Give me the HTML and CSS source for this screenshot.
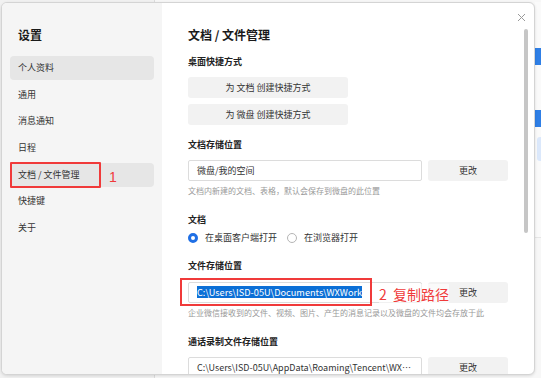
FILE: index.html
```html
<!DOCTYPE html>
<html lang="zh-CN">
<head>
    <meta charset="UTF-8">
    <meta name="viewport" content="width=device-width, initial-scale=1.0">
    <title>设置</title>
    <link rel="stylesheet" href="styles.css">
</head>
<body>

<div class="desktop">
    <div class="dialog">
        <!-- Sidebar -->
        <aside class="sidebar">
            <h2>设置</h2>
            <ul class="nav">
                <li class="active">个人资料</li>
                <li>通用</li>
                <li>消息通知</li>
                <li>日程</li>
                <li class="active marked">
                    文档 / 文件管理
                    <span class="mark-box"></span>
                    <span class="mark-num">1</span>
                </li>
                <li>快捷键</li>
                <li>关于</li>
            </ul>
        </aside>

        <!-- Content -->
        <main class="content">
            <h1>文档 / 文件管理</h1>

            <h3 class="section-title first">桌面快捷方式</h3>
            <button class="btn wide">为 文档 创建快捷方式</button>
            <button class="btn wide last">为 微盘 创建快捷方式</button>

            <h3 class="section-title">文档存储位置</h3>
            <div class="path-row">
                <div class="path-input">微盘/我的空间</div>
                <button class="btn change">更改</button>
            </div>
            <p class="hint">文档内新建的文档、表格，默认会保存到微盘的此位置</p>

            <h3 class="section-title">文档</h3>
            <div class="radio-row">
                <label class="radio checked"><span class="dot"></span>在桌面客户端打开</label>
                <label class="radio"><span class="dot"></span>在浏览器打开</label>
            </div>

            <h3 class="section-title">文件存储位置</h3>
            <div class="path-row annotated">
                <div class="path-input"><span class="selected">C:\Users\ISD-05U\Documents\WXWork</span></div>
                <button class="btn change">更改</button>
                <span class="mark-box"></span>
                <span class="mark-label">2&nbsp; 复制路径</span>
            </div>
            <p class="hint">企业微信接收到的文件、视频、图片、产生的消息记录以及微盘的文件均会存放于此</p>

            <h3 class="section-title">通话录制文件存储位置</h3>
            <div class="path-row">
                <div class="path-input ellipsis">C:\Users\ISD-05U\AppData\Roaming\Tencent\WXWork\Record</div>
                <button class="btn change">更改</button>
            </div>
        </main>

        <div class="scroll-track">
            <div class="scroll-thumb"></div>
        </div>

        <button class="close" aria-label="关闭">
            <svg width="9" height="9" viewBox="0 0 9 9">
                <path d="M1 1 L8 8 M8 1 L1 8" stroke="#9a9a9a" stroke-width="1" fill="none"/>
            </svg>
        </button>
    </div>

    <!-- window behind the dialog -->
    <div class="behind">
        <div class="tag"></div>
        <div class="tag second"></div>
        <div class="card"></div>
    </div>
</div>

</body>
</html>
```

FILE: styles.css
```css
* {
    box-sizing: border-box;
}

body {
    margin: 0;
    background-color: #f1f1f1;
    font-family: "Noto Sans CJK SC", "Noto Sans", sans-serif;
    color: #333;
    overflow: hidden;
}

.desktop {
    display: flex;
    padding: 2px 0 0 1px;
    height: 378px;
    background: linear-gradient(to right, #f1f1f1 154px, #dcdcdc 154px, #dcdcdc 155px, #f7f7f7 155px);
}

.dialog {
    position: relative;
    display: flex;
    width: 534px;
    height: 373px;
    flex-shrink: 0;
    background: #fff;
    border: 1px solid #d4d4d4;
    border-radius: 6px;
    overflow: hidden;
    box-shadow: 0 1px 3px rgba(0, 0, 0, 0.12);
}

/* Sidebar */

.sidebar {
    width: 160px;
    flex-shrink: 0;
    background-color: #f5f5f5;
    padding: 0 8px 0 8px;
}

.sidebar h2 {
    margin: 23px 0 0 8px;
    font-size: 12px;
    line-height: 18px;
    font-weight: bold;
    color: #1a1a1a;
}

.nav {
    list-style: none;
    margin: 12px 0 0 0;
    padding: 0;
    display: flex;
    flex-direction: column;
    gap: 2.65px;
}

.nav li {
    position: relative;
    height: 24px;
    line-height: 24px;
    padding-left: 8px;
    font-size: 9px;
    color: #333;
    border-radius: 4px;
}

.nav li.active {
    background-color: #e6e6e6;
}

.marked .mark-box {
    position: absolute;
    left: 0;
    top: -1px;
    width: 91px;
    height: 26px;
    border: 2px solid #f03a3a;
    border-radius: 1px;
}

.mark-num {
    position: absolute;
    left: 99px;
    top: 4px;
    font-family: "Liberation Sans", sans-serif;
    font-size: 14px;
    line-height: 20px;
    color: #f03a3a;
}

/* Content */

.content {
    flex: 1;
    padding: 0 0 0 26px;
}

.content h1 {
    margin: 23px 0 0 0;
    font-size: 12px;
    line-height: 18px;
    font-weight: bold;
    color: #1a1a1a;
}

.section-title {
    margin: 0;
    font-size: 9px;
    line-height: 12px;
    font-weight: bold;
    color: #222;
}

.section-title.first {
    margin-top: 12px;
    margin-bottom: 9px;
}

.btn {
    display: block;
    height: 21px;
    border: none;
    border-radius: 3px;
    background-color: #f2f2f2;
    font-family: inherit;
    font-size: 9px;
    color: #333;
    padding: 0;
}

.btn.wide {
    width: 160px;
    margin-bottom: 6px;
}

.btn.wide.last {
    margin-bottom: 14px;
}

.path-row {
    position: relative;
    display: flex;
    gap: 6px;
    margin-top: 9px;
}

.path-input {
    width: 234px;
    height: 21px;
    border: 1px solid #dcdcdc;
    border-radius: 2px;
    padding-left: 8px;
    font-size: 9px;
    line-height: 19px;
    color: #333;
    white-space: nowrap;
    overflow: hidden;
}

.path-input.ellipsis {
    text-overflow: ellipsis;
    padding-right: 4px;
}

.btn.change {
    width: 80px;
}

.selected {
    background-color: #0b6fd6;
    color: #fff;
    font-size: 9.2px;
    line-height: 12px;
    display: inline-block;
}

.hint {
    margin: 4px 0 18px 0;
    font-size: 8px;
    line-height: 11px;
    color: #999;
}

.radio-row {
    display: flex;
    gap: 10px;
    margin: 6px 0 16px 0;
    font-size: 9px;
    line-height: 12px;
}

.radio {
    display: flex;
    align-items: center;
    gap: 7px;
    color: #333;
}

.radio .dot {
    width: 10px;
    height: 10px;
    border-radius: 50%;
    border: 1px solid #b5b5b5;
    background: #fff;
}

.radio.checked .dot {
    border: 3px solid #1f6fe5;
}

.annotated {
    margin-top: 10px;
}

.annotated .mark-box {
    position: absolute;
    left: -8px;
    top: -4px;
    width: 192px;
    height: 28px;
    border: 2px solid #f03a3a;
}

.mark-label {
    position: absolute;
    left: 191px;
    top: 2px;
    font-size: 14px;
    line-height: 20px;
    color: #f03a3a;
    background: rgba(255, 255, 255, 0.6);
}

/* Scrollbar and close */

.scroll-track {
    width: 14px;
    flex-shrink: 0;
    padding: 26px 4px 0 4px;
}

.scroll-thumb {
    width: 4px;
    height: 204px;
    border-radius: 2px;
    background-color: #c6c6c6;
}

.close {
    position: absolute;
    top: 6px;
    right: 7px;
    width: 11px;
    height: 11px;
    padding: 1px;
    border: none;
    background: none;
}

/* Window behind */

.behind {
    flex: 1;
    display: flex;
    flex-direction: column;
    padding-top: 46px;
    background: linear-gradient(to bottom, #fafafa 235px, #e6e6e6 235px, #e6e6e6 236px, #f7f7f7 236px);
}

.tag {
    height: 17px;
    background-color: #2f7fe6;
}

.tag.second {
    margin-top: 45px;
}

.card {
    margin: 10px 0 0 2px;
    height: 24px;
    background-color: #dbe8fb;
    border-radius: 3px 0 0 3px;
}
```
